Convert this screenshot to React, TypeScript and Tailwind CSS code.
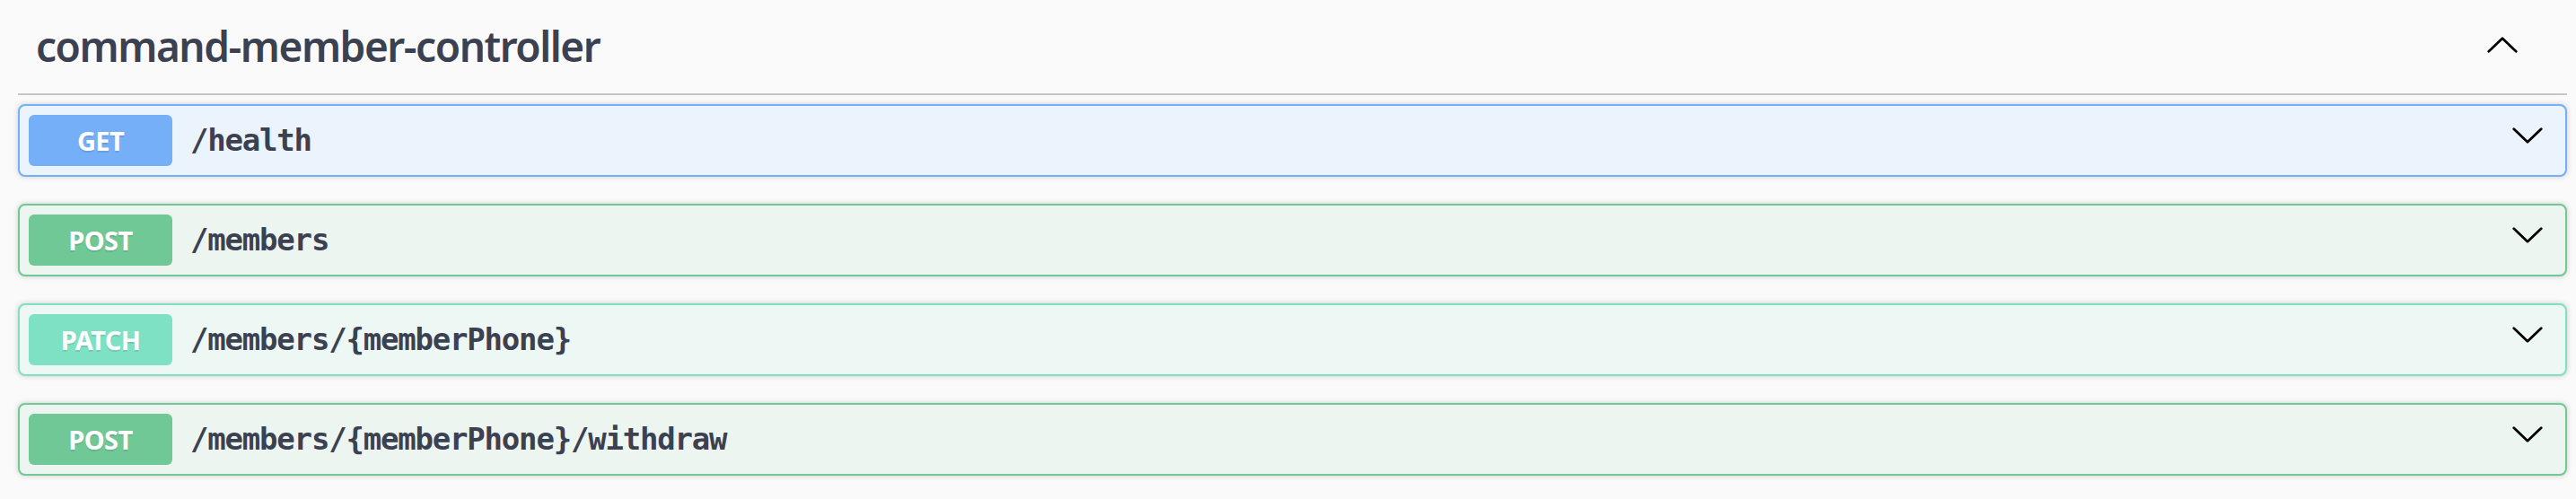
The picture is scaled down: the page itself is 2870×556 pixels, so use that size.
import React from 'react';

type Op = {
  method: string;
  path: string;
  border: string;
  bg: string;
  badge: string;
};

const ops: Op[] = [
  { method: 'GET', path: '/health', border: 'border-[#74aff8]', bg: 'bg-[#ebf3fc]', badge: 'bg-[#74aff8]' },
  { method: 'POST', path: '/members', border: 'border-[#6fc895]', bg: 'bg-[#ecf5f0]', badge: 'bg-[#6fc895]' },
  { method: 'PATCH', path: '/members/{memberPhone}', border: 'border-[#7ee1c4]', bg: 'bg-[#edf7f3]', badge: 'bg-[#7ee1c4]' },
  { method: 'POST', path: '/members/{memberPhone}/withdraw', border: 'border-[#6fc895]', bg: 'bg-[#ecf5f0]', badge: 'bg-[#6fc895]' },
];

const ChevronDown = () => (
  <svg width="34" height="18" viewBox="0 0 34 18" fill="none">
    <polyline points="1.8,1.8 17,16.2 32.2,1.8" stroke="#000" strokeWidth="2.8" strokeLinecap="round" strokeLinejoin="round" />
  </svg>
);

const ChevronUp = () => (
  <svg width="34" height="18" viewBox="0 0 34 18" fill="none">
    <polyline points="1.8,16.2 17,1.8 32.2,16.2" stroke="#000" strokeWidth="2.8" strokeLinecap="round" strokeLinejoin="round" />
  </svg>
);

const App = () => {
  return (
    <div className="min-h-screen w-full bg-[#fafafa] pl-[20px] pr-[10px]">
      <div className="flex h-[106px] items-center justify-between border-b-2 border-[#c4c6cb] pl-[20px] pr-[55px]">
        <h3 className="mb-[2px] font-['Noto_Sans',sans-serif] text-[46px] font-semibold tracking-[-0.032em] text-[#3b4151]">
          command-member-controller
        </h3>
        <div className="mb-[4px]">
          <ChevronUp />
        </div>
      </div>
      <div className="mt-[10px] flex flex-col gap-[30px]">
        {ops.map((op, idx) => (
          <div
            key={idx}
            className={`flex h-[81px] items-center rounded-[8px] border-2 p-[10px] pr-[25px] shadow-[0_0_6px_rgba(0,0,0,0.19)] ${op.border} ${op.bg}`}
          >
            <div
              className={`flex h-[57px] w-[160px] items-center justify-center rounded-[6px] font-['Noto_Sans',sans-serif] text-[29px] font-bold tracking-[-0.02em] text-white [text-shadow:0_2px_0_rgba(0,0,0,0.1)] ${op.badge}`}
            >
              {op.method}
            </div>
            <span className="flex-1 px-[20px] font-['DejaVu_Sans_Mono',monospace] text-[34px] font-bold tracking-[-1.2px] text-[#3b4151]">
              {op.path}
            </span>
            <div className="mb-[12px]">
              <ChevronDown />
            </div>
          </div>
        ))}
      </div>
    </div>
  );
};

export default App;
